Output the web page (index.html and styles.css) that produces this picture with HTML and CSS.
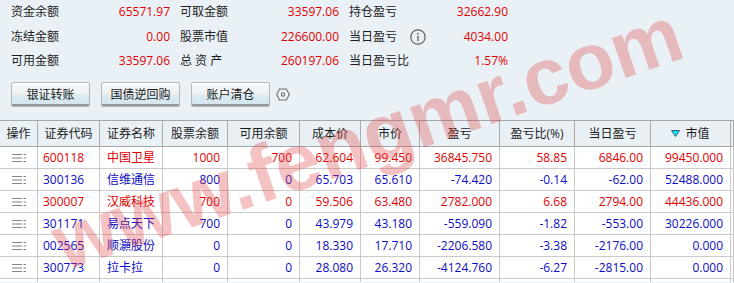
FILE: index.html
```html
<!DOCTYPE html>
<html lang="zh-CN">
<head>
<meta charset="utf-8">
<title>资金持仓</title>
<link rel="stylesheet" href="styles.css">
</head>
<body>
<div class="summary">
  <div class="group">
    <div class="lbl">资金余额</div><div class="val">65571.97</div>
    <div class="lbl">冻结金额</div><div class="val">0.00</div>
    <div class="lbl">可用金额</div><div class="val">33597.06</div>
  </div>
  <div class="group">
    <div class="lbl">可取金额</div><div class="val">33597.06</div>
    <div class="lbl">股票市值</div><div class="val">226600.00</div>
    <div class="lbl">总 资 产</div><div class="val">260197.06</div>
  </div>
  <div class="group">
    <div class="lbl">持仓盈亏</div><div class="val">32662.90</div>
    <div class="lbl">当日盈亏<svg class="info" width="16" height="16" viewBox="0 0 16 16"><circle cx="8" cy="8" r="7.2" fill="none" stroke="#5c5c5c" stroke-width="1.2"/><circle cx="8" cy="4.6" r="0.95" fill="#5c5c5c"/><rect x="7.35" y="6.6" width="1.3" height="5.4" fill="#5c5c5c"/></svg></div><div class="val">4034.00</div>
    <div class="lbl">当日盈亏比</div><div class="val">1.57%</div>
  </div>
</div>

<div class="actions">
  <button class="btn">银证转账</button>
  <button class="btn">国债逆回购</button>
  <button class="btn">账户清仓</button>
  <svg class="gear" width="14" height="13" viewBox="0 0 14 13"><polygon points="3.6,1 10.4,1 13.3,6.5 10.4,12 3.6,12 0.7,6.5" fill="none" stroke="#6e6e6e" stroke-width="1.1"/><circle cx="7" cy="6.5" r="1.7" fill="none" stroke="#6e6e6e" stroke-width="1.1"/></svg>
</div>

<div class="table">
  <div class="tr head">
    <div class="th">操作</div>
    <div class="th">证券代码</div>
    <div class="th">证券名称</div>
    <div class="th">股票余额</div>
    <div class="th">可用余额</div>
    <div class="th">成本价</div>
    <div class="th">市价</div>
    <div class="th">盈亏</div>
    <div class="th">盈亏比(%)</div>
    <div class="th">当日盈亏</div>
    <div class="th"><svg class="sort" width="9" height="7" viewBox="0 0 9 7"><polygon points="0.5,0.5 8.5,0.5 4.5,6.5" fill="#12e4e8" stroke="#1c3b6a" stroke-width="0.8"/></svg>市值</div>
    <div class="th"></div>
  </div>

  <div class="tr up">
    <div class="td op"><svg class="menu" width="15" height="10" viewBox="0 0 15 10"><path d="M0 1.5H10M11.5 1.5H14M0 5H10M11.5 5H14M0 8.5H10M11.5 8.5H14" stroke="#858585" stroke-width="1"/></svg></div>
    <div class="td code">600118</div><div class="td name">中国卫星</div>
    <div class="td num">1000</div><div class="td num">700</div><div class="td num">62.604</div><div class="td num">99.450</div>
    <div class="td num">36845.750</div><div class="td num">58.85</div><div class="td num">6846.00</div><div class="td num">99450.000</div><div class="td"></div>
  </div>
  <div class="tr down">
    <div class="td op"><svg class="menu" width="15" height="10" viewBox="0 0 15 10"><path d="M0 1.5H10M11.5 1.5H14M0 5H10M11.5 5H14M0 8.5H10M11.5 8.5H14" stroke="#858585" stroke-width="1"/></svg></div>
    <div class="td code">300136</div><div class="td name">信维通信</div>
    <div class="td num">800</div><div class="td num">0</div><div class="td num">65.703</div><div class="td num">65.610</div>
    <div class="td num">-74.420</div><div class="td num">-0.14</div><div class="td num">-62.00</div><div class="td num">52488.000</div><div class="td"></div>
  </div>
  <div class="tr up">
    <div class="td op"><svg class="menu" width="15" height="10" viewBox="0 0 15 10"><path d="M0 1.5H10M11.5 1.5H14M0 5H10M11.5 5H14M0 8.5H10M11.5 8.5H14" stroke="#858585" stroke-width="1"/></svg></div>
    <div class="td code">300007</div><div class="td name">汉威科技</div>
    <div class="td num">700</div><div class="td num">0</div><div class="td num">59.506</div><div class="td num">63.480</div>
    <div class="td num">2782.000</div><div class="td num">6.68</div><div class="td num">2794.00</div><div class="td num">44436.000</div><div class="td"></div>
  </div>
  <div class="tr down">
    <div class="td op"><svg class="menu" width="15" height="10" viewBox="0 0 15 10"><path d="M0 1.5H10M11.5 1.5H14M0 5H10M11.5 5H14M0 8.5H10M11.5 8.5H14" stroke="#858585" stroke-width="1"/></svg></div>
    <div class="td code">301171</div><div class="td name">易点天下</div>
    <div class="td num">700</div><div class="td num">0</div><div class="td num">43.979</div><div class="td num">43.180</div>
    <div class="td num">-559.090</div><div class="td num">-1.82</div><div class="td num">-553.00</div><div class="td num">30226.000</div><div class="td"></div>
  </div>
  <div class="tr down">
    <div class="td op"><svg class="menu" width="15" height="10" viewBox="0 0 15 10"><path d="M0 1.5H10M11.5 1.5H14M0 5H10M11.5 5H14M0 8.5H10M11.5 8.5H14" stroke="#858585" stroke-width="1"/></svg></div>
    <div class="td code">002565</div><div class="td name">顺灝股份</div>
    <div class="td num">0</div><div class="td num">0</div><div class="td num">18.330</div><div class="td num">17.710</div>
    <div class="td num">-2206.580</div><div class="td num">-3.38</div><div class="td num">-2176.00</div><div class="td num">0.000</div><div class="td"></div>
  </div>
  <div class="tr down">
    <div class="td op"><svg class="menu" width="15" height="10" viewBox="0 0 15 10"><path d="M0 1.5H10M11.5 1.5H14M0 5H10M11.5 5H14M0 8.5H10M11.5 8.5H14" stroke="#858585" stroke-width="1"/></svg></div>
    <div class="td code">300773</div><div class="td name">拉卡拉</div>
    <div class="td num">0</div><div class="td num">0</div><div class="td num">28.080</div><div class="td num">26.320</div>
    <div class="td num">-4124.760</div><div class="td num">-6.27</div><div class="td num">-2815.00</div><div class="td num">0.000</div><div class="td"></div>
  </div>
  <div class="tr stub">
    <div class="td"></div><div class="td"></div><div class="td"></div><div class="td"></div><div class="td"></div><div class="td"></div>
    <div class="td"></div><div class="td"></div><div class="td"></div><div class="td"></div><div class="td"></div><div class="td"></div>
  </div>
</div>

<div class="watermark">www.fengmr.com</div>
</body>
</html>
```
FILE: styles.css
```css
html, body {
  margin: 0;
  padding: 0;
}
body {
  width: 734px;
  height: 283px;
  overflow: hidden;
  position: relative;
  background: #eaf1f6;
  font-family: "Open Sans", "Noto Sans CJK SC", sans-serif;
  font-size: 12px;
  color: #1c1c1c;
}

/* summary */
.summary {
  display: flex;
  gap: 10px;
  padding-left: 11px;
}
.group {
  display: grid;
  grid-template-columns: 60px 99px;
  grid-auto-rows: 24.5px;
  line-height: 24px;
}
.lbl {
  white-space: nowrap;
  display: flex;
  align-items: center;
}
.val {
  text-align: right;
  color: #e10000;
}
.info {
  margin-left: 13px;
  flex: none;
}

/* action buttons */
.actions {
  display: flex;
  align-items: center;
  gap: 11px;
  padding-left: 11px;
  margin-top: 8.5px;
}
.btn {
  width: 79px;
  height: 25px;
  box-sizing: border-box;
  padding: 0;
  border: 1px solid #b4b8bb;
  border-radius: 2px;
  background: linear-gradient(#f6f7f8 0%, #eef1f3 48%, #dcebf2 52%, #d2e5ef 100%);
  box-shadow: inset 0 -2px 0 #8f979b, inset 0 1px 0 #ffffff;
  font: inherit;
  color: #1c1c1c;
  line-height: 21px;
}
.gear {
  margin-left: -5px;
}

/* table */
.table {
  margin-top: 13px;
  border-top: 1px solid #a2a6a9;
}
.tr {
  display: grid;
  grid-template-columns: 38px 62px 63px 65px 72px 61px 59px 80px 75px 76px 80px 3px;
}
.th {
  height: 26px;
  box-sizing: border-box;
  border-right: 1px solid #a7abae;
  border-bottom: 1px solid #a2a6a9;
  display: flex;
  align-items: center;
  justify-content: center;
  line-height: 25px;
  white-space: nowrap;
}
.sort {
  margin-right: 5px;
}
.td {
  height: 22px;
  box-sizing: border-box;
  background: #ffffff;
  border-right: 1px solid #c8c8c8;
  border-bottom: 1px solid #cacaca;
  line-height: 21px;
  white-space: nowrap;
  overflow: hidden;
}
.stub .td {
  height: 3px;
  border-bottom: 0;
}
.op {
  display: flex;
  align-items: center;
  padding-left: 12px;
}
.code {
  padding-left: 5px;
}
.name {
  padding-left: 7px;
}
.num {
  text-align: right;
  padding-right: 7px;
}
.up .td {
  color: #e00000;
}
.down .td {
  color: #0c0cc4;
}

/* watermark overlay */
.watermark {
  position: absolute;
  left: 52px;
  top: 140px;
  font-family: "Liberation Sans", sans-serif;
  font-weight: bold;
  font-size: 80px;
  line-height: 80px;
  white-space: nowrap;
  color: rgba(222, 76, 76, 0.34);
  transform-origin: 198px 62px;
  transform: rotate(-19deg);
  pointer-events: none;
}
```
